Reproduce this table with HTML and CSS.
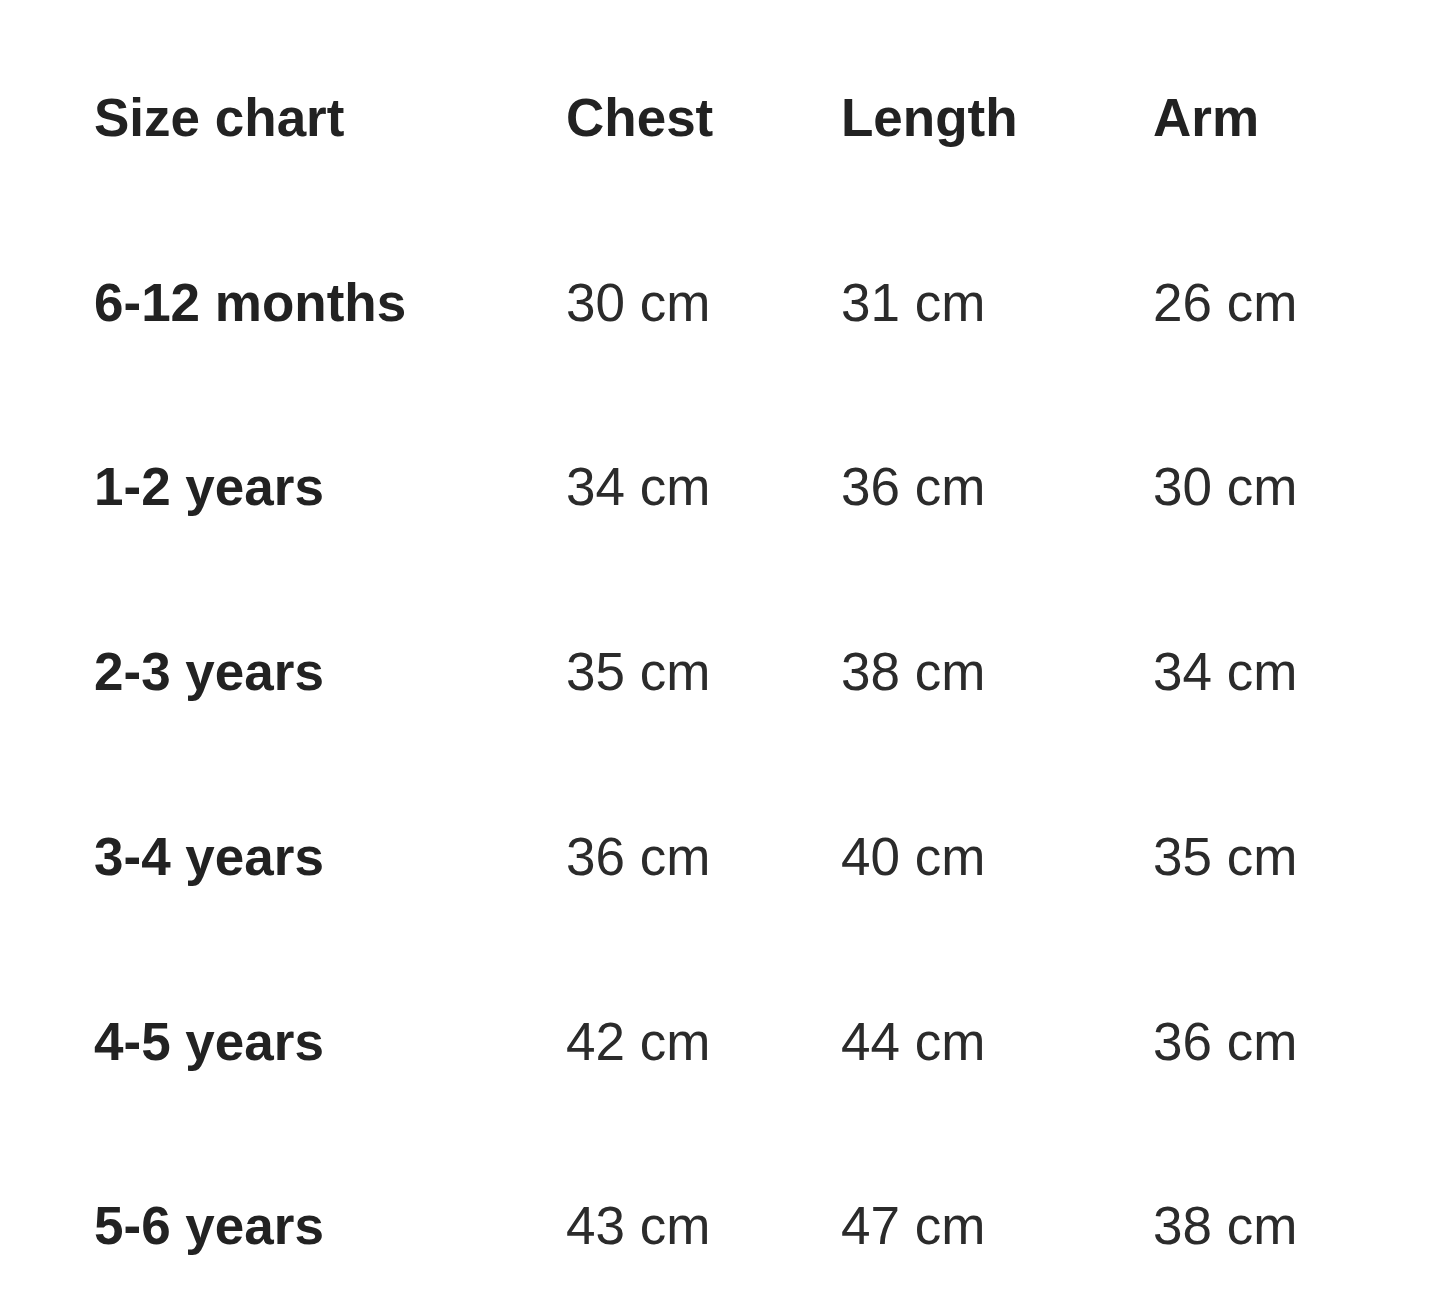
FILE: index.html
```html
<!DOCTYPE html>
<html lang="en">
<head>
<meta charset="utf-8">
<title>Size chart</title>
<link rel="stylesheet" href="styles.css">
</head>
<body>
<main class="page">
  <table class="chart">
    <colgroup>
      <col class="c-size">
      <col class="c-chest">
      <col class="c-length">
      <col class="c-arm">
    </colgroup>
    <thead>
      <tr>
        <th>Size chart</th>
        <th>Chest</th>
        <th>Length</th>
        <th>Arm</th>
      </tr>
    </thead>
    <tbody>
      <tr><th>6-12 months</th><td>30 cm</td><td>31 cm</td><td>26 cm</td></tr>
      <tr><th>1-2 years</th><td>34 cm</td><td>36 cm</td><td>30 cm</td></tr>
      <tr><th>2-3 years</th><td>35 cm</td><td>38 cm</td><td>34 cm</td></tr>
      <tr><th>3-4 years</th><td>36 cm</td><td>40 cm</td><td>35 cm</td></tr>
      <tr><th>4-5 years</th><td>42 cm</td><td>44 cm</td><td>36 cm</td></tr>
      <tr><th>5-6 years</th><td>43 cm</td><td>47 cm</td><td>38 cm</td></tr>
    </tbody>
  </table>
</main>
</body>
</html>
```

FILE: styles.css
```css
html, body {
  margin: 0;
  padding: 0;
  background: #ffffff;
}

.page {
  padding: 26px 0 0 94px;
  font-family: "Liberation Sans", Arial, sans-serif;
  font-size: 53px;
  color: #2b2b2b;
}

.chart {
  border-collapse: collapse;
  table-layout: fixed;
  width: 1351px;
}

.c-size { width: 472px; }
.c-chest { width: 275px; }
.c-length { width: 312px; }
.c-arm { width: 292px; }

.chart th,
.chart td {
  padding: 0;
  text-align: left;
  vertical-align: baseline;
  line-height: 184.7px;
  white-space: nowrap;
}

.chart th {
  font-weight: 700;
  color: #222222;
}

.chart td {
  font-weight: 400;
  color: #2b2b2b;
}
```
